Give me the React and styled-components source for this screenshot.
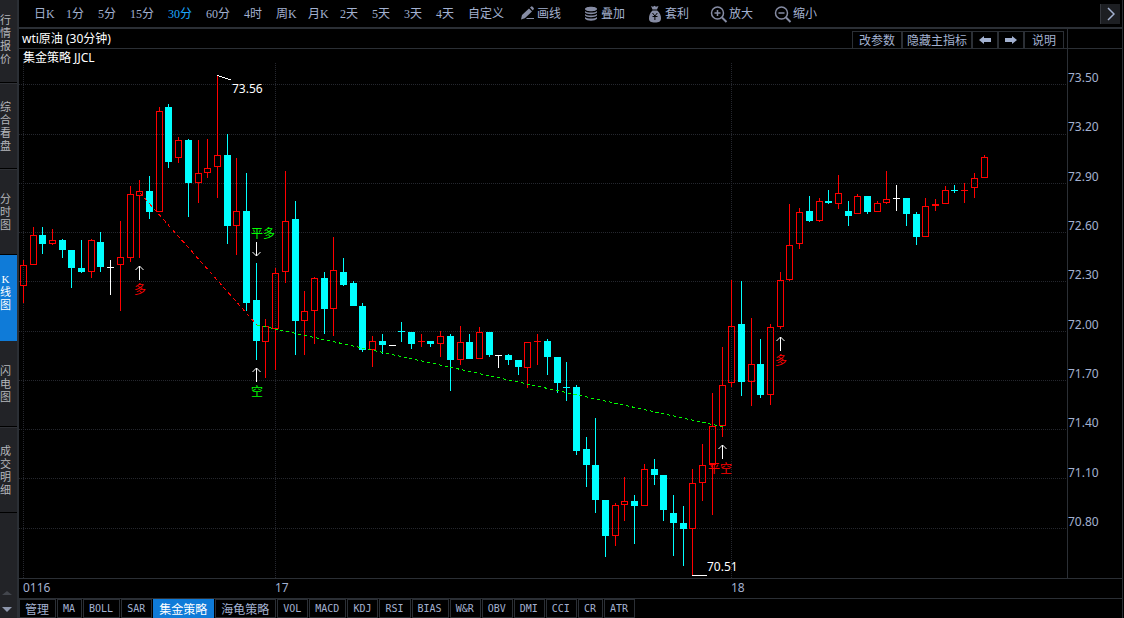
import React from 'react';
import styled, { createGlobalStyle } from 'styled-components';

const color = {
  ink: '#a3b1d0',
  icon: '#858ba3',
  line: '#2b2f35',
  panel: '#222327',
  active: '#0f7bd8',
  highlight: '#1ca8ff',
  up: '#ff0000',
  down: '#00ffff',
  flat: '#ffffff',
  green: '#00ff00',
  grid: '#25272e',
};

const cjk = '"Noto Sans CJK SC", sans-serif';

const GlobalStyle = createGlobalStyle`
  *, *::before, *::after { box-sizing: border-box; }
  body {
    margin: 0;
    background: #000;
    color: ${color.ink};
    font: 12px/18px "Noto Sans", ${cjk};
  }
  button {
    margin: 0;
    padding: 0;
    border: 0;
    background: none;
    color: inherit;
    font: inherit;
    white-space: nowrap;
    cursor: pointer;
  }
`;

const Shell = styled.div`
  display: flex;
  min-height: 100vh;
  background: #000;
`;

const Sidebar = styled.nav`
  flex: 0 0 19px;
  display: flex;
  flex-direction: column;
  border-right: 2px solid ${color.line};
  background: ${color.panel};
`;

const SideTab = styled.button`
  display: flex;
  align-items: center;
  height: 86px;
  padding: 2px 0 0;
  border-top: 1px solid #000;
  box-shadow: inset 0 1px 0 #2f3136;
  color: #b4b6bb;

  &:first-child {
    height: 82px;
    padding: 0 0 2px;
    border-top: 0;
    box-shadow: none;
  }
  &[aria-current] {
    padding: 0 0 11px;
    background: ${color.active};
    box-shadow: none;
    color: #fff;
  }
  &[aria-current] + & {
    border-top-color: ${color.active};
    box-shadow: none;
  }
`;

const SideLabel = styled.span`
  width: 11px;
  font: 11px/13px "Liberation Serif", ${cjk};
  text-align: center;
  white-space: normal;
  word-break: break-all;
`;

const SideScroll = styled.div`
  flex: 1;
  display: flex;
  flex-direction: column;
  justify-content: flex-end;
  border-top: 1px solid #000;
`;

const ScrollButton = styled.button`
  display: flex;
  align-items: center;
  height: 17px;
  padding-left: 2px;
  color: ${(p) => (p.$dim ? '#43464d' : '#8d96ac')};
`;

const Main = styled.main`
  flex: 1;
  min-width: 0;
  display: flex;
  flex-direction: column;
  margin-right: 1px;
  border-right: 1px solid ${color.line};
`;

const Toolbar = styled.header`
  display: flex;
  align-items: center;
  height: 29px;
  padding: 0 2px 0 15px;
  border-bottom: 2px solid ${color.line};
  font: 12px/18px "Liberation Serif", ${cjk};
`;

const Periods = styled.div`
  display: flex;
  gap: 14px;
`;

const Tools = styled.div`
  display: flex;
  gap: 20px;
  margin-left: 13px;
`;

const PeriodButton = styled.button`
  width: ${(p) => p.$width}px;
  color: ${(p) => (p.$active ? color.highlight : color.ink)};
`;

const ToolButton = styled.button`
  display: flex;
  align-items: center;
  svg {
    width: 20px;
    height: 18px;
    color: ${color.icon};
  }
`;

const MoreButton = styled.button`
  display: flex;
  align-items: center;
  justify-content: center;
  width: 20px;
  height: 20px;
  margin-left: auto;
  border-left: 1px solid #34373d;
  background: #1d1f23;
`;

const TitleRow = styled.div`
  display: flex;
  height: 20px;
  border-bottom: 1px solid ${color.line};
`;

const Title = styled.h1`
  flex: 1;
  margin: 0;
  padding-left: 3px;
  color: #fff;
  font: 12px/20px "Noto Sans", ${cjk};
`;

const Actions = styled.div`
  display: flex;
  padding: 2px 3px 0 0;
`;

const ActionButton = styled.button`
  display: flex;
  align-items: center;
  justify-content: center;
  width: ${(p) => p.$width}px;
  border: 1px solid ${color.line};
  border-bottom: 0;
  font: 12px/16px ${cjk};
`;

const AxisHead = styled.div`
  flex: 0 0 55px;
  border-left: 1px solid ${color.line};
`;

const ChartRow = styled.section`
  display: flex;
  border-bottom: 1px solid ${color.line};
`;

const Plot = styled.div`
  position: relative;
  flex: 1;
  min-width: 0;
  > svg {
    display: block;
    width: 100%;
    height: auto;
  }
`;

const Legend = styled.div`
  position: absolute;
  top: 0;
  left: 4px;
  color: #fff;
`;

const PriceAxis = styled.ol`
  flex: 0 0 55px;
  display: flex;
  flex-direction: column;
  justify-content: space-between;
  margin: 0;
  padding: 20px 0 47px;
  border-left: 1px solid ${color.line};
  list-style: none;
`;

const DateAxis = styled.div`
  display: grid;
  grid-template-columns: 252fr 456fr 391fr;
  height: 19px;
  padding-left: 4px;
`;

const Indicators = styled.footer`
  display: flex;
  gap: 1px;
  height: 20px;
  border-top: 1px solid ${color.line};
`;

const IndicatorButton = styled.button`
  padding: 0 6px 0 5px;
  border: 1px solid ${(p) => (p.$active ? color.active : color.line)};
  background: ${(p) => (p.$active ? color.active : '#000')};
  color: ${(p) => (p.$active ? '#fff' : color.ink)};
  font: ${(p) => (p.$latin ? '10px/17px "DejaVu Sans Mono", monospace' : `12px/17px ${cjk}`)};
`;

const periods = ['日K', '1分', '5分', '15分', '30分', '60分', '4时', '周K', '月K', '2天', '5天', '3天', '4天', '自定义'];
const sideTabs = ['行情报价', '综合看盘', '分时图', 'K线图', '闪电图', '成交明细'];
const indicators = ['管理', 'MA', 'BOLL', 'SAR', '集金策略', '海龟策略', 'VOL', 'MACD', 'KDJ', 'RSI', 'BIAS', 'W&R', 'OBV', 'DMI', 'CCI', 'CR', 'ATR'];
const prices = ['73.50', '73.20', '72.90', '72.60', '72.30', '72.00', '71.70', '71.40', '71.10', '70.80'];

// Half-width characters take 6px, full-width ones 12px
const cellWidth = (label) => [...label].reduce((sum, ch) => sum + (/[0-9A-Z]/.test(ch) ? 6 : 12), 0);

const PencilIcon = () => (
  <svg viewBox="0 0 20 18" fill="currentColor" aria-hidden="true">
    <path d="M4 14.500l1-4.500L12 3.500l3 3L7.800 13.200zM13 2.600l1.600-1.400c.8 0 2.400 1.600 2.400 2.600L15.800 5.500z" />
    <path d="M10 13h7v1H9z" />
  </svg>
);

const StackIcon = () => (
  <svg viewBox="0 0 20 18" fill="currentColor" aria-hidden="true">
    <path d="M4 4c0-3 12-3 12 0s-12 3-12 0z" />
    <path d="M4 6c2 2 10 2 12 0v1.500c-2 2.300-10 2.300-12 0zM4 9c2 2 10 2 12 0v1.500c-2 2.300-10 2.300-12 0zM4 12c2 2 10 2 12 0v1.800c-2 2.600-10 2.600-12 0z" />
  </svg>
);

const MoneyBagIcon = () => (
  <svg viewBox="0 0 20 18" fill="currentColor" aria-hidden="true">
    <path d="M6 1l2 .7L9.500.7l1.500 1L13.500 1 12 4.500H7.500zM7.500 5.500h4.700c2.600 2 4 5 3.800 8-.2 3-2 4-6 4s-6-1-6-4c0-3 1-6 3.500-8z" />
    <path d="M7.500 8l2.400 3 2.400-3M7.500 11.500h5M9.900 11v4" fill="none" stroke="#000" strokeWidth="1" />
  </svg>
);

const ZoomIcon = ({ plus }) => (
  <svg viewBox="0 0 20 18" fill="none" stroke="currentColor" aria-hidden="true">
    <circle cx="8.500" cy="8" r="6" strokeWidth="1.500" />
    <path d="M13 12.500l4.500 4.500" strokeWidth="2" />
    <path d={plus ? 'M5.500 8h6M8.500 5v6' : 'M5.500 8h6'} strokeWidth="1.500" />
  </svg>
);

const ArrowIcon = ({ right }) => (
  <svg width="12" height="8" viewBox="0 0 12 8" fill="currentColor" aria-hidden="true">
    <path d={right ? 'M12 4L7 0v2H0v4h7v2z' : 'M0 4l5-4v2h7v4H5v2z'} />
  </svg>
);

const tools = [
  { label: '画线', icon: <PencilIcon /> },
  { label: '叠加', icon: <StackIcon /> },
  { label: '套利', icon: <MoneyBagIcon /> },
  { label: '放大', icon: <ZoomIcon plus /> },
  { label: '缩小', icon: <ZoomIcon /> },
];

const actions = [
  { label: '改参数', width: 50 },
  { label: '隐藏主指标', width: 70 },
  { label: '上一个', width: 26, icon: <ArrowIcon /> },
  { label: '下一个', width: 26, icon: <ArrowIcon right /> },
  { label: '说明', width: 40 },
];

// Each candle: high, body top, body bottom, low, kind (u = up, d = down, w = flat)
const candles = [
  [260, 265, 286, 303, 'u'], [227, 235, 265, 265, 'u'], [227, 235, 244, 254, 'd'], [229, 240, 244, 245, 'u'],
  [239, 240, 250, 258, 'd'], [250, 250, 268, 288, 'd'], [240, 268, 272, 273, 'd'], [239, 240, 272, 278, 'u'],
  [232, 242, 267, 272, 'd'], [260, 267, 268, 295, 'w'], [221, 257, 265, 311, 'u'], [186, 194, 258, 262, 'u'],
  [180, 191, 196, 258, 'u'], [176, 191, 212, 219, 'd'], [107, 111, 212, 212, 'u'], [104, 107, 162, 168, 'd'],
  [137, 140, 158, 163, 'u'], [139, 140, 183, 217, 'd'], [140, 173, 183, 203, 'u'], [139, 168, 173, 178, 'u'],
  [75, 155, 167, 198, 'u'], [134, 155, 226, 244, 'd'], [158, 211, 226, 255, 'u'], [173, 211, 303, 311, 'd'],
  [263, 300, 341, 360, 'd'], [319, 326, 342, 378, 'u'], [268, 273, 329, 370, 'u'], [171, 221, 272, 283, 'u'],
  [201, 219, 321, 355, 'd'], [291, 311, 321, 355, 'u'], [277, 278, 311, 344, 'u'], [272, 278, 309, 334, 'd'],
  [237, 270, 309, 336, 'u'], [258, 272, 285, 286, 'd'], [281, 283, 306, 306, 'd'], [303, 306, 350, 352, 'd'],
  [336, 341, 350, 367, 'u'], [334, 341, 345, 354, 'd'], [345, 345, 346, 346, 'w'], [322, 331, 332, 342, 'd'],
  [332, 332, 344, 349, 'd'], [334, 341, 342, 347, 'u'], [341, 341, 344, 347, 'd'], [331, 336, 344, 357, 'u'],
  [334, 336, 360, 391, 'd'], [326, 342, 360, 365, 'u'], [334, 342, 359, 359, 'd'], [327, 332, 359, 359, 'u'],
  [332, 332, 355, 357, 'd'], [355, 355, 356, 368, 'w'], [354, 355, 360, 365, 'd'], [360, 360, 367, 375, 'd'],
  [342, 342, 368, 388, 'u'], [334, 341, 342, 365, 'u'], [339, 341, 357, 375, 'd'], [357, 357, 383, 393, 'd'],
  [362, 387, 388, 401, 'd'], [385, 387, 451, 455, 'd'], [437, 449, 465, 487, 'd'], [418, 465, 500, 513, 'd'],
  [500, 500, 536, 557, 'd'], [503, 505, 536, 546, 'u'], [477, 501, 505, 521, 'u'], [495, 501, 506, 544, 'd'],
  [464, 469, 506, 506, 'u'], [459, 469, 475, 485, 'd'], [475, 475, 510, 521, 'd'], [495, 513, 523, 556, 'd'],
  [506, 523, 529, 566, 'd'], [469, 483, 529, 575, 'u'], [444, 465, 483, 501, 'u'], [393, 426, 465, 515, 'u'],
  [347, 385, 426, 437, 'u'], [280, 326, 383, 387, 'u'], [281, 324, 382, 396, 'd'], [318, 364, 382, 406, 'u'],
  [339, 364, 395, 398, 'd'], [324, 327, 395, 405, 'u'], [272, 280, 327, 329, 'u'], [204, 245, 280, 281, 'u'],
  [208, 212, 244, 249, 'u'], [196, 211, 221, 222, 'd'], [198, 201, 221, 222, 'u'], [190, 201, 203, 204, 'd'],
  [175, 193, 204, 209, 'u'], [201, 211, 216, 226, 'd'], [194, 196, 214, 214, 'u'], [196, 196, 212, 214, 'd'],
  [201, 203, 212, 212, 'u'], [171, 199, 203, 204, 'u'], [185, 198, 199, 211, 'w'], [198, 198, 214, 226, 'd'],
  [212, 214, 237, 245, 'd'], [198, 206, 237, 237, 'u'], [199, 204, 206, 211, 'u'], [186, 190, 204, 204, 'u'],
  [185, 190, 191, 193, 'd'], [183, 190, 191, 203, 'u'], [173, 178, 188, 198, 'u'], [155, 157, 178, 178, 'u'],
];

const kinds = { u: color.up, d: color.down, w: color.flat };
const candleX = (i) => Math.round(22.85 + 9.7037 * i);

const Candle = ({ x, data: [high, top, bottom, low, kind] }) => {
  const fill = kinds[kind];
  const hollow = kind === 'u' && bottom - top > 2;
  return (
    <g fill={fill}>
      {top > high && <rect x={x} y={high} width="1" height={top - high} />}
      {low > bottom && <rect x={x} y={bottom} width="1" height={low - bottom} />}
      {hollow ? (
        <rect x={x - 2.5} y={top + 0.5} width="6" height={bottom - top - 1} fill="none" stroke={fill} />
      ) : (
        <rect x={x - 3} y={top} width="7" height={bottom - top} />
      )}
    </g>
  );
};

const Signal = ({ x, y, down }) => (
  <path
    d={down ? `M${x + 0.5} ${y}v14m-4-4l4 4 4-4` : `M${x + 0.5} ${y + 14}v-14m-4 4l4-4 4 4`}
    fill="none"
    stroke="#fff"
  />
);

const gridRows = [84, 134, 183, 232, 281, 331, 380, 429, 478, 528];
const gridColumns = [23, 275, 731];

const Chart = () => (
  <svg viewBox="19 49 1048 529" role="img" aria-label="wti原油 30分钟 K线图">
    <g shapeRendering="crispEdges">
      <g stroke={color.grid} strokeDasharray="1 1">
        {gridRows.map((y) => <path key={y} d={`M19 ${y + 0.5}H1067`} />)}
        {gridColumns.map((x) => <path key={x} d={`M${x + 0.5} 63V578`} />)}
      </g>
      {candles.map((data, i) => <Candle key={i} x={candleX(i)} data={data} />)}
      <g fill="none" strokeDasharray="4 3">
        <path d="M140 193L257 325" stroke={color.up} />
        <path d="M257 325L724 427" stroke={color.green} strokeDasharray="3 3" />
      </g>
      <path d="M217.500 75.500L231 80M692 575.500H707" stroke="#fff" fill="none" />
    </g>
    <Signal x={139} y={266} />
    <Signal x={256} y={242} down />
    <Signal x={256} y={368} />
    <Signal x={722} y={445} />
    <Signal x={780} y={337} />
    <g fontFamily='"Noto Sans CJK SC", sans-serif' fontSize="12">
      <text x="134" y="294" fill={color.up}>多</text>
      <text x="251" y="238" fill={color.green}>平多</text>
      <text x="251" y="396" fill={color.green}>空</text>
      <text x="708" y="473" fill={color.up}>平空</text>
      <text x="775" y="365" fill={color.up}>多</text>
    </g>
    <g fontFamily='"Noto Sans", sans-serif' fontSize="12" fill="#fff">
      <text x="232" y="93">73.56</text>
      <text x="707" y="571">70.51</text>
    </g>
  </svg>
);

export default function App() {
  return (
    <>
      <GlobalStyle />
      <Shell>
        <Sidebar>
          {sideTabs.map((label) => (
            <SideTab key={label} aria-current={label === 'K线图' ? 'page' : undefined}>
              <SideLabel>{label}</SideLabel>
            </SideTab>
          ))}
          <SideScroll>
            <ScrollButton $dim aria-label="向上">
              <svg width="10" height="4" viewBox="0 0 10 4" fill="currentColor"><path d="M5 0l5 4H0z" /></svg>
            </ScrollButton>
            <ScrollButton aria-label="向下">
              <svg width="10" height="5" viewBox="0 0 10 5" fill="currentColor"><path d="M0 0h10L5 5z" /></svg>
            </ScrollButton>
          </SideScroll>
        </Sidebar>
        <Main>
          <Toolbar>
            <Periods>
              {periods.map((label) => (
                <PeriodButton key={label} $width={cellWidth(label)} $active={label === '30分'}>
                  {label}
                </PeriodButton>
              ))}
            </Periods>
            <Tools>
              {tools.map(({ label, icon }) => (
                <ToolButton key={label}>{icon}{label}</ToolButton>
              ))}
            </Tools>
            <MoreButton aria-label="更多">
              <svg width="8" height="14" viewBox="0 0 8 14" fill="none" stroke="currentColor" strokeWidth="1.500">
                <path d="M1 1l6 6-6 6" />
              </svg>
            </MoreButton>
          </Toolbar>
          <TitleRow>
            <Title>wti原油 (30分钟)</Title>
            <Actions>
              {actions.map(({ label, width, icon }) => (
                <ActionButton key={label} $width={width} aria-label={label}>{icon || label}</ActionButton>
              ))}
            </Actions>
            <AxisHead />
          </TitleRow>
          <ChartRow>
            <Plot>
              <Chart />
              <Legend>集金策略 JJCL</Legend>
            </Plot>
            <PriceAxis>
              {prices.map((price) => <li key={price}>{price}</li>)}
            </PriceAxis>
          </ChartRow>
          <DateAxis>
            <span>0116</span>
            <span>17</span>
            <span>18</span>
          </DateAxis>
          <Indicators>
            {indicators.map((label) => (
              <IndicatorButton
                key={label}
                $latin={/^[A-Z&]+$/.test(label)}
                $active={label === '集金策略'}
              >
                {label}
              </IndicatorButton>
            ))}
          </Indicators>
        </Main>
      </Shell>
    </>
  );
}
